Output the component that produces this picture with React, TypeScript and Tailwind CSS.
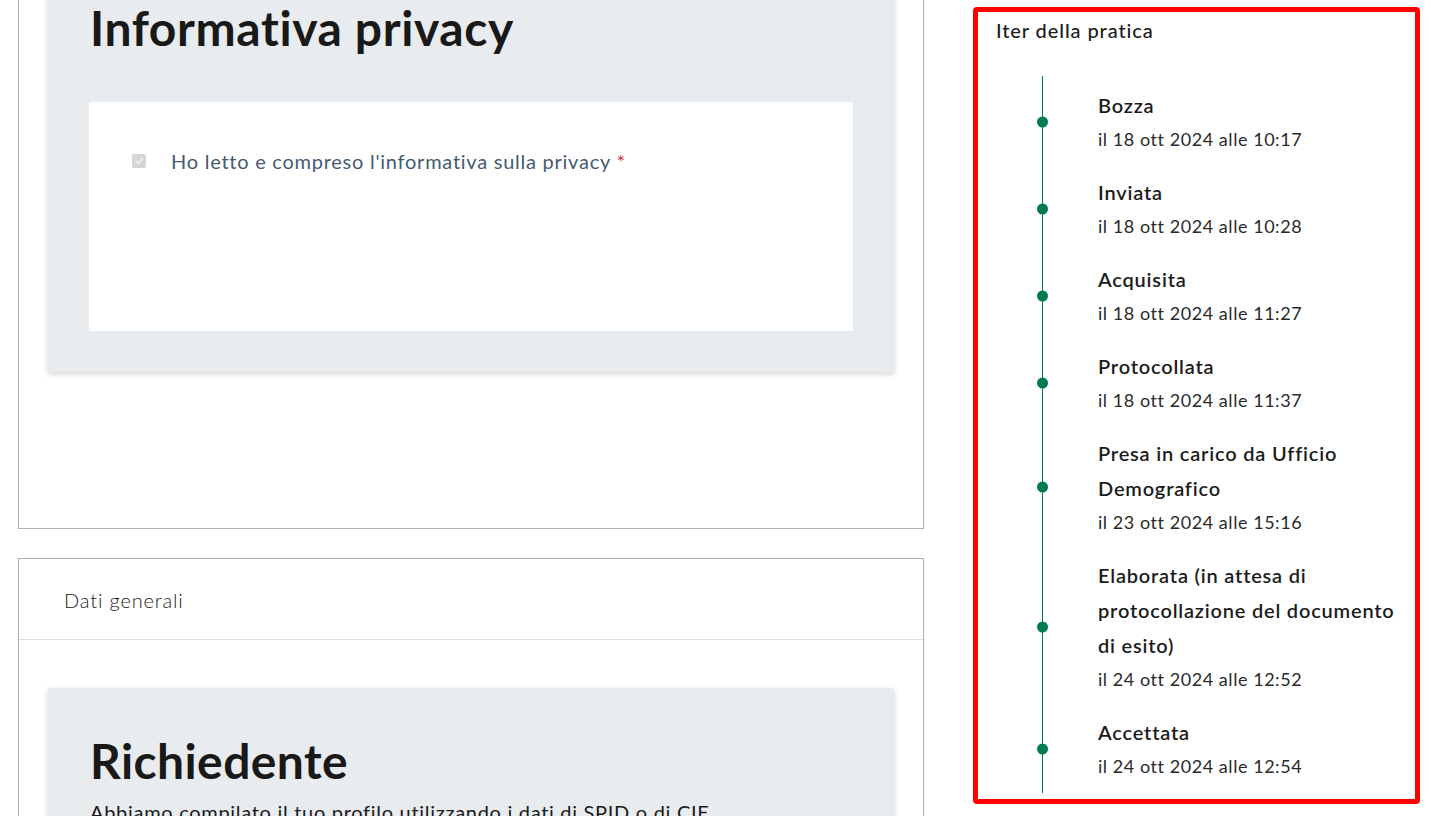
import React from 'react';

// Iter della pratica: stati con data
const steps: { title: string[]; date: string }[] = [
  { title: ['Bozza'], date: 'il 18 ott 2024 alle 10:17' },
  { title: ['Inviata'], date: 'il 18 ott 2024 alle 10:28' },
  { title: ['Acquisita'], date: 'il 18 ott 2024 alle 11:27' },
  { title: ['Protocollata'], date: 'il 18 ott 2024 alle 11:37' },
  { title: ['Presa in carico da Ufficio', 'Demografico'], date: 'il 23 ott 2024 alle 15:16' },
  { title: ['Elaborata (in attesa di', 'protocollazione del documento', 'di esito)'], date: 'il 24 ott 2024 alle 12:52' },
  { title: ['Accettata'], date: 'il 24 ott 2024 alle 12:54' },
];

function CheckboxDisabled() {
  return (
    <span className="flex h-[14px] w-[14px] shrink-0 items-center justify-center rounded-[2px] bg-[#d6d6d6]">
      <svg viewBox="0 0 12 12" className="h-[10px] w-[10px]" fill="none">
        <path d="M2.5 6.2 5 8.6 9.6 3.4" stroke="#f2f2f2" strokeWidth="1.8" strokeLinecap="round" strokeLinejoin="round" />
      </svg>
    </span>
  );
}

function Timeline() {
  return (
    <div className="mt-[31px] ml-[46px] border-l border-[#007a50] pt-[2px] pb-[1px]">
      {steps.map((s) => (
        <div key={s.date} className="relative py-[10px] pl-[55px]">
          <span className="absolute left-[-6px] top-1/2 h-[11px] w-[11px] -translate-y-1/2 rounded-full bg-[#007a50]" />
          <div className="text-[20px] font-semibold leading-[35px] tracking-[0.8px] text-[#1c1c1c]">
            {s.title.map((line) => (
              <div key={line} className="whitespace-nowrap">{line}</div>
            ))}
          </div>
          <div className="text-[18px] leading-[32px] tracking-[0.55px] text-[#2a2a2a]">{s.date}</div>
        </div>
      ))}
    </div>
  );
}

export default function App() {
  return (
    <div className="h-[816px] w-[1437px] overflow-hidden bg-white font-['Lato',sans-serif] text-[#1a1a1a]">
      <div className="flex items-start pl-[18px] pr-[17px]">
        {/* colonna sinistra: moduli */}
        <div className="-mt-[75px] w-[906px] shrink-0">
          <section className="border border-[#b1b1b1] px-[29px] pt-[29px] pb-[156px]">
            <div className="bg-[#e9ecef] px-[41px] pt-[44px] pb-[41px] shadow-[0_2px_6px_rgba(0,0,0,0.18)]">
              <h2 className="pl-[1px] text-[48px] font-bold leading-[58px] tracking-[0.6px] text-[#191919]">Informativa privacy</h2>
              <div className="mt-[45px] h-[229px] bg-white pl-[43px] pt-[44px]">
                <div className="flex items-center gap-[25px] leading-[30px]">
                  <CheckboxDisabled />
                  <span className="text-[20px] tracking-[0.75px] text-[#455b71]">
                    Ho letto e compreso l'informativa sulla privacy <span className="text-[#d1344c]">*</span>
                  </span>
                </div>
              </div>
            </div>
          </section>

          <section className="mt-[29px] border border-[#b1b1b1]">
            <div className="flex h-[81px] items-center border-b border-[#dcdcdc] px-[45px] pt-[2px]">
              <span className="text-[20px] font-light tracking-[0.85px] text-[#1a1a1a]">Dati generali</span>
            </div>
            <div className="px-[29px] pt-[48px]">
              <div className="bg-[#e9ecef] px-[41px] pt-[44px] pb-[41px] shadow-[0_2px_6px_rgba(0,0,0,0.18)]">
                <h2 className="pl-[1px] text-[48px] font-bold leading-[58px] tracking-[0.4px] text-[#191919]">Richiedente</h2>
                <p className="mt-[7px] pl-[1px] text-[20px] leading-[30px] tracking-[0.7px] text-[#1a1a1a]">
                  Abbiamo compilato il tuo profilo utilizzando i dati di SPID o di CIE.
                </p>
                <div className="mt-[40px] h-[200px] bg-white" />
              </div>
            </div>
          </section>
        </div>

        {/* colonna destra: iter della pratica */}
        <aside className="ml-[49px] mt-[7px] h-[797px] w-[447px] shrink-0 rounded-[4px] border-[5px] border-[#ff0000] pl-[18px] pr-[8px]">
          <h3 className="pt-[3px] text-[20px] font-medium leading-[30px] tracking-[0.9px] text-[#1c1c1c]">Iter della pratica</h3>
          <Timeline />
        </aside>
      </div>
    </div>
  );
}
